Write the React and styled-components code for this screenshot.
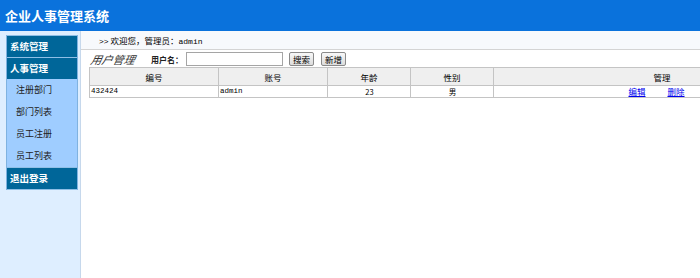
import React from 'react';
import styled, { createGlobalStyle } from 'styled-components';

const GlobalStyle = createGlobalStyle`
    html, body {
        margin: 0;
        padding: 0;
        height: 100%;
        background: #fff;
    }
    body {
        font-family: "Liberation Mono", "Noto Sans CJK SC", monospace;
        font-size: 9px;
        color: #000;
    }
    #root {
        height: 100%;
    }
`;

const menu = [
    { title: '系统管理', children: [] },
    { title: '人事管理', children: ['注册部门', '部门列表', '员工注册', '员工列表'] },
    { title: '退出登录', children: [] },
];

const users = [{ id: '432424', account: 'admin', age: 23, sex: '男' }];

export default function App() {
    return (
        <Page>
            <GlobalStyle />
            <Header>企业人事管理系统</Header>
            <Body>
                <Sidebar>
                    <Menu>
                        {menu.map(group => (
                            <React.Fragment key={group.title}>
                                <MenuTitle>{group.title}</MenuTitle>
                                {group.children.map(item => (
                                    <MenuItem key={item}>{item}</MenuItem>
                                ))}
                            </React.Fragment>
                        ))}
                    </Menu>
                </Sidebar>
                <Main>
                    <Welcome>
                        <Mono>&gt;&gt;</Mono> 欢迎您，管理员：<Mono>admin</Mono>
                    </Welcome>
                    <Toolbar>
                        <PageTitle>用户管理</PageTitle>
                        <Label>用户名：</Label>
                        <Input />
                        <Button>搜索</Button>
                        <Button>新增</Button>
                    </Toolbar>
                    <Table>
                        <colgroup>
                            <col style={{ width: 129 }} />
                            <col style={{ width: 109 }} />
                            <col style={{ width: 83 }} />
                            <col style={{ width: 83 }} />
                            <col />
                        </colgroup>
                        <thead>
                            <tr>
                                <Th>编号</Th>
                                <Th>账号</Th>
                                <Th>年龄</Th>
                                <Th>性别</Th>
                                <Th>管理</Th>
                            </tr>
                        </thead>
                        <tbody>
                            {users.map(u => (
                                <tr key={u.id}>
                                    <Td>{u.id}</Td>
                                    <Td>{u.account}</Td>
                                    <Td align="center">{u.age}</Td>
                                    <Td align="center">{u.sex}</Td>
                                    <Td align="center">
                                        <Actions>
                                            <Link href="#">编辑</Link>
                                            <Link href="#">删除</Link>
                                        </Actions>
                                    </Td>
                                </tr>
                            ))}
                        </tbody>
                    </Table>
                </Main>
            </Body>
        </Page>
    );
}

const Page = styled.div`
    display: flex;
    flex-direction: column;
    height: 278px;
    overflow: hidden;
`;

const Header = styled.div`
    height: 31px;
    background-color: #0a72dc;
    color: #fff;
    font-family: "Noto Sans CJK SC", sans-serif;
    font-weight: bold;
    font-size: 13px;
    line-height: 31px;
    padding-left: 5px;
    flex-shrink: 0;
`;

const Body = styled.div`
    display: flex;
    flex: 1;
    min-width: 0;
`;

const Sidebar = styled.div`
    width: 81px;
    background-color: #deeeff;
    border-right: 1px solid #c6d8ec;
    padding: 4px 0 0 6px;
    box-sizing: border-box;
    flex-shrink: 0;
`;

const Menu = styled.div`
    width: 70px;
    display: flex;
    flex-direction: column;
    border-left: 1px solid #7fb2e0;
    border-right: 1px solid #7fb2e0;
`;

const MenuTitle = styled.div`
    height: 21px;
    line-height: 21px;
    background-color: #006699;
    border-top: 1px solid #8fbfe6;
    color: #fff;
    font-family: "Noto Sans CJK SC", sans-serif;
    font-weight: bold;
    font-size: 9.5px;
    padding-left: 3px;
    &:last-child {
        border-bottom: 1px solid #8fbfe6;
    }
`;

const MenuItem = styled.div`
    height: 22px;
    line-height: 22px;
    background-color: #9fcdff;
    color: #222;
    font-family: "Noto Sans CJK SC", sans-serif;
    font-size: 9px;
    padding-left: 9px;
`;

const Main = styled.div`
    flex: 1;
    display: flex;
    flex-direction: column;
    min-width: 0;
    overflow: hidden;
`;

const Welcome = styled.div`
    height: 18px;
    line-height: 18px;
    background-color: #f7f9fc;
    border-bottom: 1px solid #d4d4d4;
    padding-left: 18px;
    font-size: 8.5px;
    font-family: "Noto Sans CJK SC", sans-serif;
`;

const Mono = styled.span`
    font-family: "Liberation Mono", monospace;
    font-size: 8px;
`;

const Toolbar = styled.div`
    display: flex;
    align-items: center;
    height: 16px;
    padding-left: 10px;
    margin-top: 1px;
`;

const PageTitle = styled.span`
    font-family: "Noto Sans CJK SC", sans-serif;
    font-style: italic;
    font-size: 11px;
    color: #333;
    transform: skewX(-12deg);
    margin-right: 16px;
`;

const Label = styled.span`
    font-family: "Noto Sans CJK SC", sans-serif;
    font-size: 8px;
    font-weight: bold;
    color: #222;
`;

const Input = styled.input`
    width: 95px;
    height: 12px;
    border: 1px solid #a5a5a5;
    padding: 0;
    margin: 0 6px 0 3px;
`;

const Button = styled.button`
    height: 14px;
    padding: 0 3px;
    font-family: "Noto Sans CJK SC", sans-serif;
    font-size: 8.5px;
    line-height: 12px;
    background: linear-gradient(#f8f8f8, #dcdcdc);
    border: 1px solid #8a8a8a;
    border-radius: 2px;
    margin-right: 7px;
`;

const Table = styled.table`
    margin-left: 8px;
    width: 742px;
    flex-shrink: 0;
    border-collapse: collapse;
    table-layout: fixed;
`;

const Th = styled.th`
    height: 17px;
    background-color: #efefef;
    border: 1px solid #c4c4c4;
    font-family: "Noto Sans CJK SC", sans-serif;
    font-weight: normal;
    font-size: 8.5px;
    padding: 0;
`;

const Td = styled.td`
    height: 11px;
    border: 1px solid #c4c4c4;
    font-size: 7.5px;
    line-height: 11px;
    padding: 0 0 0 1px;
    text-align: ${({ align }) => align || 'left'};
    font-family: ${({ align }) =>
        align ? '"Noto Sans CJK SC", sans-serif' : '"Liberation Mono", monospace'};
`;

const Actions = styled.span`
    display: inline-flex;
    gap: 22px;
    margin-right: 12px;
`;

const Link = styled.a`
    color: #0000ee;
    text-decoration: underline;
    font-family: "Noto Sans CJK SC", sans-serif;
    font-size: 8.5px;
`;
